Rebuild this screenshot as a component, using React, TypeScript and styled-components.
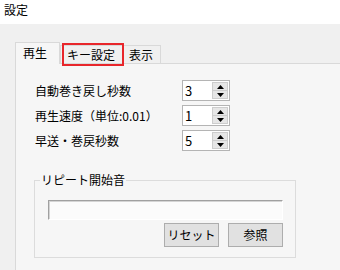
import React from 'react';
import styled, { createGlobalStyle } from 'styled-components';

const GlobalStyle = createGlobalStyle`
  html, body {
    margin: 0;
    padding: 0;
  }
  body {
    background: #f0f0f0;
    font-family: "Noto Sans CJK JP", "Noto Sans", sans-serif;
    font-size: 12px;
    color: #000;
  }
`;

const Window = styled.div`
  width: 340px;
  height: 270px;
  overflow: hidden;
  background: #f0f0f0;
  display: flex;
  flex-direction: column;
`;

const TitleBar = styled.div`
  flex: none;
  height: 24px;
  box-sizing: border-box;
  padding: 2px 0 0 4px;
  line-height: 16px;
  background: #fff;
`;

const Body = styled.div`
  padding: 18px 0 0 15px;
`;

const TabStrip = styled.div`
  position: relative;
  z-index: 1;
  display: flex;
  align-items: flex-end;
  height: 21px;
`;

const Tab = styled.div<{ $active?: boolean }>`
  position: relative;
  box-sizing: border-box;
  border: 1px solid #d9d9d9;
  border-bottom: none;
  white-space: nowrap;
  height: ${p => (p.$active ? '22px' : '18px')};
  margin-bottom: ${p => (p.$active ? '-1px' : '0')};
  margin-left: ${p => (p.$active ? '0' : '-1px')};
  padding: ${p => (p.$active ? '2px 12px 0 7px' : '2px 7px 0 6px')};
  line-height: ${p => (p.$active ? '15px' : '14px')};
  background: ${p => (p.$active ? '#f6f6f6' : '#f0f0f0')};
  &:nth-child(2) {
    margin-left: 0;
  }
`;

const Highlight = styled.span`
  position: absolute;
  top: -3px;
  bottom: -3px;
  left: 1px;
  right: -2px;
  border: 2px solid #e8262b;
  z-index: 2;
`;

const Panel = styled.div`
  box-sizing: border-box;
  width: 340px;
  min-height: 230px;
  border: 1px solid #d9d9d9;
  background: #f6f6f6;
  padding: 16px 0 0 18px;
`;

const Settings = styled.div`
  display: grid;
  grid-template-columns: 147px 48px;
  grid-auto-rows: 21px;
  row-gap: 4px;
  padding-left: 1px;
`;

const Label = styled.div`
  align-self: center;
  line-height: 15px;
  white-space: nowrap;
`;

const SpinBox = styled.div`
  box-sizing: border-box;
  display: flex;
  border: 1px solid #b4b4b4;
  background: #fff;
`;

const SpinValue = styled.div`
  flex: 1;
  padding-left: 2px;
  font-size: 13px;
  line-height: 19px;
`;

const SpinButtons = styled.div`
  display: flex;
  flex-direction: column;
  width: 16px;
  margin: 1px 1px 1px 0;
`;

const SpinButton = styled.div`
  flex: 1;
  display: flex;
  align-items: center;
  justify-content: center;
  background: #e6e6e6;
  border: 1px solid #cdcdcd;
  & + & {
    border-top: none;
  }
`;

const Group = styled.fieldset`
  box-sizing: border-box;
  width: 262px;
  margin: 22px 0 0 0;
  padding: 0;
  border: 1px solid #dcdcdc;
  min-width: 0;
`;

const Legend = styled.legend`
  margin-left: 5px;
  padding: 0 1px;
  line-height: 14px;
`;

const GroupBody = styled.div`
  padding: 13px 12px 10px 13px;
`;

const PathField = styled.div`
  box-sizing: border-box;
  height: 20px;
  background: #fbfbfb;
  border-style: solid;
  border-width: 1px;
  border-color: #a0a0a0 #fff #fff #a0a0a0;
  box-shadow: inset 1px 1px 0 #d4d4d4;
`;

const ButtonRow = styled.div`
  display: flex;
  justify-content: flex-end;
  gap: 9px;
  margin-top: 3px;
`;

const Button = styled.div`
  box-sizing: border-box;
  width: 55px;
  height: 24px;
  line-height: 22px;
  text-align: center;
  background: #e1e1e1;
  border: 1px solid #adadad;
`;

const Arrow = ({ up }: { up?: boolean }) => (
  <svg width="7" height="4" viewBox="0 0 7 4">
    <polygon points={up ? '3.5,0 7,4 0,4' : '0,0 7,0 3.5,4'} fill="#000" />
  </svg>
);

const Spin = ({ value }: { value: string }) => (
  <SpinBox>
    <SpinValue>{value}</SpinValue>
    <SpinButtons>
      <SpinButton>
        <Arrow up />
      </SpinButton>
      <SpinButton>
        <Arrow />
      </SpinButton>
    </SpinButtons>
  </SpinBox>
);

const rows = [
  { label: '自動巻き戻し秒数', value: '3' },
  { label: '再生速度（単位:0.01）', value: '1' },
  { label: '早送・巻戻秒数', value: '5' },
];

export default function App() {
  return (
    <Window>
      <GlobalStyle />
      <TitleBar>設定</TitleBar>
      <Body>
        <TabStrip>
          <Tab $active>再生</Tab>
          <Tab>
            キー設定
            <Highlight />
          </Tab>
          <Tab>表示</Tab>
        </TabStrip>
        <Panel>
          <Settings>
            {rows.map(r => (
              <React.Fragment key={r.label}>
                <Label>{r.label}</Label>
                <Spin value={r.value} />
              </React.Fragment>
            ))}
          </Settings>
          <Group>
            <Legend>リピート開始音</Legend>
            <GroupBody>
              <PathField />
              <ButtonRow>
                <Button>リセット</Button>
                <Button>参照</Button>
              </ButtonRow>
            </GroupBody>
          </Group>
        </Panel>
      </Body>
    </Window>
  );
}
